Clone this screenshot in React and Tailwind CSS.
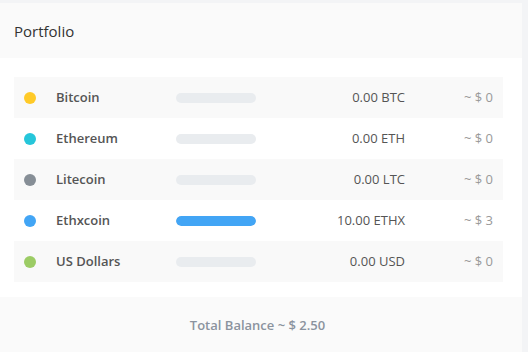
import React from "react";

const rows = [
  { name: "Bitcoin", dot: "bg-[#ffca28]", fill: 0, amount: "0.00 BTC", value: "~ $ 0", alt: true },
  { name: "Ethereum", dot: "bg-[#26c6da]", fill: 0, amount: "0.00 ETH", value: "~ $ 0", alt: false },
  { name: "Litecoin", dot: "bg-[#868e96]", fill: 0, amount: "0.00 LTC", value: "~ $ 0", alt: true },
  { name: "Ethxcoin", dot: "bg-[#42a5f5]", fill: 100, amount: "10.00 ETHX", value: "~ $ 3", alt: false },
  { name: "US Dollars", dot: "bg-[#9ccc65]", fill: 0, amount: "0.00 USD", value: "~ $ 0", alt: true },
];

export default function App() {
  return (
    <div
      className="w-[528px] h-[352px] overflow-hidden bg-[#f3f4f6] pt-[3px]"
      style={{ fontFamily: '"Open Sans", "Noto Sans", sans-serif' }}
    >
      <div className="w-[522px] bg-white">
        <div className="h-[55px] bg-[#fafafa] flex items-center pl-[14px] pt-[1px] text-[15px] text-[#333]">
          Portfolio
        </div>
        <div className="pt-[19px] pb-[15px] pl-[14px] pr-[19px]">
          {rows.map((r) => (
            <div
              key={r.name}
              className={`h-[41px] flex items-center pl-[10px] pr-[10px] ${r.alt ? "bg-[#f9f9f9]" : "bg-white"}`}
            >
              <div className={`w-3 h-3 rounded-full ${r.dot}`} />
              <div className="ml-5 w-[120px] text-[13px] font-semibold text-[#555]">{r.name}</div>
              <div className="w-20 h-[10px] rounded-[5px] bg-[#e9ecef] overflow-hidden">
                <div className="h-full bg-[#42a5f5] rounded-[5px]" style={{ width: `${r.fill}%` }} />
              </div>
              <div className="flex-1 text-right text-[13px] text-[#555]">{r.amount}</div>
              <div className="w-[88px] text-right text-[13px] text-[#999]">{r.value}</div>
            </div>
          ))}
        </div>
        <div className="h-[58px] bg-[#fafafa] flex items-center justify-center pr-[7px] text-[13px] font-semibold text-[#8b939e]">
          Total Balance ~ $ 2.50
        </div>
      </div>
    </div>
  );
}
